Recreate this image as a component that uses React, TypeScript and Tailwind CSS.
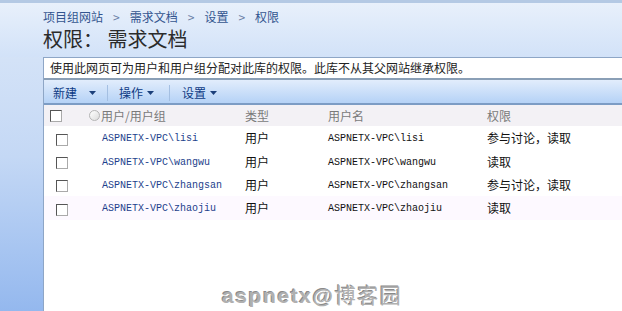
import React from "react";

const cjk = "font-['Noto_Sans_CJK_SC','Noto_Sans',sans-serif]";

const rows = [
  { name: "ASPNETX-VPC\\lisi", type: "用户", perm: "参与讨论，读取" },
  { name: "ASPNETX-VPC\\wangwu", type: "用户", perm: "读取" },
  { name: "ASPNETX-VPC\\zhangsan", type: "用户", perm: "参与讨论，读取" },
  { name: "ASPNETX-VPC\\zhaojiu", type: "用户", perm: "读取" },
];

const crumbs = ["项目组网站", "需求文档", "设置", "权限"];

const Arrow = ({ className = "" }: { className?: string }) => (
  <svg width="7" height="4" viewBox="0 0 7 4" className={className}>
    <path d="M0 0h7L3.5 4z" fill="#1b3f7a" />
  </svg>
);

const Check = ({ className = "" }: { className?: string }) => (
  <span
    className={`block w-[12px] h-[12px] bg-white border border-t-[#555] border-l-[#555] border-r-[#aaa] border-b-[#aaa] ${className}`}
  />
);

export default function App() {
  return (
    <div
      className={`relative w-[622px] h-[311px] overflow-hidden flex flex-col bg-gradient-to-b from-[#dce8f8] via-[#c4d8f5] to-[#94b8ee] border-t-[3px] border-[#b4c9e4] ${cjk}`}
    >
      {/* header */}
      <div className="pl-[43px] pt-[6px] h-[54px] bg-gradient-to-b from-[#e8f0fb] to-[#d2e2f8]">
        <div className="flex items-center text-[12px] leading-[15px] text-[#33558f]">
          {crumbs.map((c, i) => (
            <React.Fragment key={c}>
              {i > 0 && <span className="px-[10px] text-[#6a7fa6]">&gt;</span>}
              <span>{c}</span>
            </React.Fragment>
          ))}
        </div>
        <div className="text-[20px] leading-[24px] text-[#2b2b2b] mt-[3px]">权限： 需求文档</div>
      </div>

      {/* content box */}
      <div className="ml-[43px] flex-1 bg-white border-l border-t border-[#8ea6c6] flex flex-col">
        <div className="h-[22px] flex items-center pl-[6px] text-[12px] text-[#222] border-b-2 border-[#8a9fb6]">
          使用此网页可为用户和用户组分配对此库的权限。此库不从其父网站继承权限。
        </div>

        {/* toolbar */}
        <div className="h-[25px] pt-[2px] flex items-center pl-[9px] text-[12px] text-[#0e3b85] bg-gradient-to-b from-[#e2edfc] to-[#b5d2f6] border-b-2 border-[#7c9cc4]">
          <span>新建</span>
          <Arrow className="ml-[12px]" />
          <span className="ml-[11px] w-px h-[16px] bg-[#a4bfe2]" />
          <span className="ml-[11px]">操作</span>
          <Arrow className="ml-[4px]" />
          <span className="ml-[15px] w-px h-[16px] bg-[#a4bfe2]" />
          <span className="ml-[12px]">设置</span>
          <Arrow className="ml-[4px]" />
        </div>

        {/* column header */}
        <div className="h-[21px] flex items-center text-[12px] text-[#7a7a7a] bg-[#f3f1f5]">
          <Check className="ml-[6px] border-[#777]" />
          <span className="ml-[27px] w-[11px] h-[11px] rounded-full border border-[#b5b5b5] bg-gradient-to-br from-white to-[#dcdcdc]" />
          <span className="ml-px w-[144px]">用户/用户组</span>
          <span className="w-[83px]">类型</span>
          <span className="w-[159px]">用户名</span>
          <span>权限</span>
        </div>

        {/* rows */}
        {rows.map((r, i) => (
          <div
            key={i}
            className={`h-[23.4px] pt-[1px] flex items-center text-[12px] ${i === 3 ? "bg-[#fdf9ff]" : "bg-white"}`}
          >
            <Check className="ml-[12px] mt-[3px]" />
            <span className="ml-[34px] w-[143px] pt-[1px] font-['Liberation_Mono',monospace] text-[10px] text-[#1d3f8c]">
              {r.name}
            </span>
            <span className="w-[83px] text-[#111]">{r.type}</span>
            <span className="w-[159px] pt-[1px] font-['Liberation_Mono',monospace] text-[10px] text-[#111]">
              {r.name}
            </span>
            <span className="text-[#111]">{r.perm}</span>
          </div>
        ))}
      </div>

      {/* watermark */}
      <div className="absolute left-[222px] top-[281px] text-[21px] leading-[24px] font-bold tracking-[1.6px] text-[#b0b0b0] [text-shadow:1px_1px_0_#ffffff,-1px_-1px_0_#8a8a8a] font-['Liberation_Sans','Noto_Sans_CJK_SC',sans-serif]">
        aspnetx@<span className="font-normal">博客园</span>
      </div>
    </div>
  );
}
